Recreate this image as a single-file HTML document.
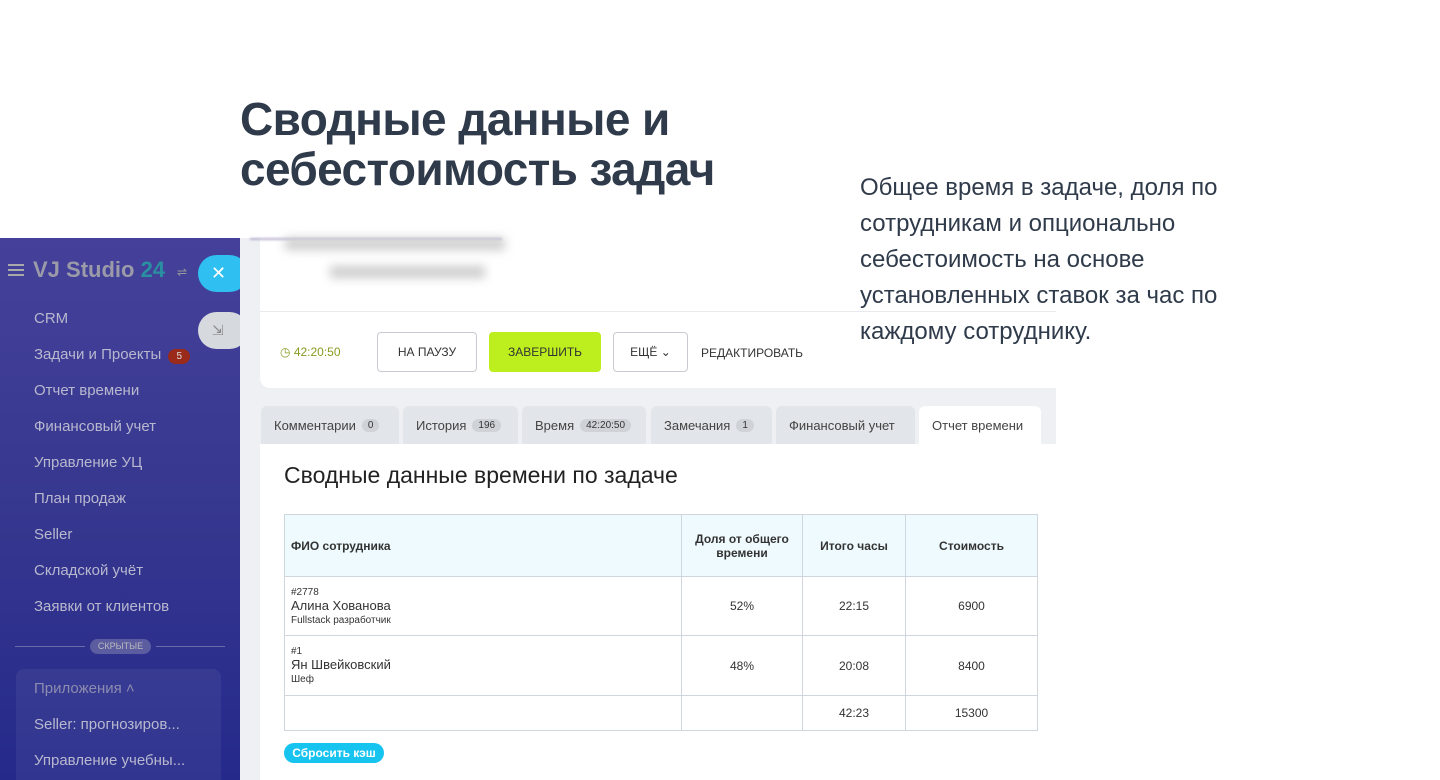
<!DOCTYPE html>
<html><head><meta charset="utf-8"><style>
*{margin:0;padding:0;box-sizing:border-box}
body{width:1440px;height:780px;overflow:hidden;background:#fff;font-family:"Liberation Sans","DejaVu Sans",sans-serif;position:relative;color:#333}
.abs{position:absolute}
h1{position:absolute;left:240px;top:94px;font-size:46px;line-height:50px;font-weight:bold;color:#2f3a4a;letter-spacing:-0.6px}
.desc{position:absolute;left:860px;top:170px;font-size:24px;line-height:36px;color:#2f3a4a;width:440px;z-index:5}
.side{position:absolute;left:0;top:238px;width:240px;height:542px;background:linear-gradient(180deg,#45419a 0%,#36378f 50%,#25298a 100%);overflow:hidden}
.side .it{position:absolute;left:34px;font-size:15px;color:#b8b8cf}
.gray{position:absolute;left:240px;top:238px;width:816px;height:542px;background:#eef0f3}
.card{position:absolute;left:260px;top:238px;width:796px;height:150px;background:#fff;border-radius:0 0 0 10px}
.btn{position:absolute;top:332px;height:40px;border:1px solid #c8ccd2;border-radius:4px;font-size:12px;display:flex;align-items:center;justify-content:center;color:#333}
.tab{position:absolute;top:406px;height:38px;background:#e2e5e9;border-radius:6px 6px 0 0;font-size:13px;color:#444;display:flex;align-items:center;padding-left:13px}
.bd{display:inline-block;background:#cfd3d8;border-radius:9px;font-size:10px;padding:1px 6px;margin-left:6px;color:#333}
table{position:absolute;left:284px;top:514px;border-collapse:collapse;width:754px}
td{border:1px solid #cfd6de;font-size:12px;text-align:center;color:#333}
th{border:1px solid #cfd6de;background:#eefafd;font-size:12px;font-weight:bold;color:#333}
</style></head><body>
<h1>Сводные данные и<br>себестоимость задач</h1>

<div class="side">
<div class="abs" style="left:8px;top:26px;width:16px;height:2px;background:#aaa;box-shadow:0 5px 0 #aaa,0 10px 0 #aaa"></div>
<div class="abs" style="left:33px;top:19px;font-size:22px;font-weight:bold;color:#9a9aa8">VJ Studio <span style="color:#2a8fa0">24</span></div>
<div class="abs" style="left:177px;top:27px;font-size:12px;color:#999">⇌</div>
<div class="abs" style="left:198px;top:17px;width:50px;height:37px;background:#2fbff0;border-radius:19px;color:#fff;font-size:18px;padding-left:13px;line-height:37px">✕</div>
<div class="abs" style="left:198px;top:74px;width:50px;height:37px;background:#d6d9de;border-radius:19px;color:#888;font-size:14px;padding-left:14px;line-height:37px">⇲</div>
<div class="it" style="top:72px">CRM</div>
<div class="it" style="top:108px">Задачи и Проекты <span style="display:inline-block;background:#9a2a1a;color:#ddd;font-size:10px;border-radius:9px;padding:2px 8px;margin-left:3px">5</span></div>
<div class="it" style="top:144px">Отчет времени</div>
<div class="it" style="top:180px">Финансовый учет</div>
<div class="it" style="top:216px">Управление УЦ</div>
<div class="it" style="top:252px">План продаж</div>
<div class="it" style="top:288px">Seller</div>
<div class="it" style="top:324px">Складской учёт</div>
<div class="it" style="top:360px">Заявки от клиентов</div>
<div class="abs" style="left:15px;top:408px;width:70px;height:1px;background:#6a6aa8"></div>
<div class="abs" style="left:156px;top:408px;width:69px;height:1px;background:#6a6aa8"></div>
<div class="abs" style="left:90px;top:401px;width:61px;height:15px;background:#5c5ca0;border-radius:8px;font-size:9px;color:#bbb;text-align:center;line-height:15px">СКРЫТЫЕ</div>
<div class="abs" style="left:16px;top:431px;width:205px;height:120px;background:rgba(255,255,255,0.06);border-radius:8px"></div>
<div class="it" style="top:442px;color:#8c8cb0">Приложения ˄</div>
<div class="it" style="top:478px">Seller: прогнозиров...</div>
<div class="it" style="top:514px">Управление учебны...</div>
</div>

<div class="gray"></div>
<div class="card">
<div class="abs" style="left:-10px;top:0;width:252px;height:2px;background:#b8b0d0;filter:blur(1px)"></div>
<div class="abs" style="left:25px;top:0;width:220px;height:12px;background:#ccc;filter:blur(5px)"></div>
<div class="abs" style="left:70px;top:28px;width:155px;height:12px;background:#ccc;filter:blur(5px)"></div>
<div class="abs" style="left:0;top:73px;width:796px;height:1px;background:#e8eaee"></div>
<div class="abs" style="left:20px;top:107px;font-size:12px;color:#8a9a20">◷ <span style="color:#8a9a20">42:20:50</span></div>
</div>
<div class="btn" style="left:377px;width:100px">НА ПАУЗУ</div>
<div class="btn" style="left:489px;width:112px;background:#bdee1e;border-color:#bdee1e">ЗАВЕРШИТЬ</div>
<div class="btn" style="left:613px;width:75px">ЕЩЁ ⌄</div>
<div class="abs" style="left:701px;top:346px;font-size:12px">РЕДАКТИРОВАТЬ</div>

<div class="tab" style="left:261px;width:138px">Комментарии<span class="bd">0</span></div>
<div class="tab" style="left:403px;width:115px">История<span class="bd">196</span></div>
<div class="tab" style="left:522px;width:124px">Время<span class="bd">42:20:50</span></div>
<div class="tab" style="left:651px;width:121px">Замечания<span class="bd">1</span></div>
<div class="tab" style="left:776px;width:139px">Финансовый учет</div>
<div class="tab" style="left:919px;width:122px;background:#fff">Отчет времени</div>

<div class="abs" style="left:260px;top:444px;width:796px;height:336px;background:#fff"></div>
<div class="abs" style="left:284px;top:462px;font-size:23px;color:#222">Сводные данные времени по задаче</div>
<table>
<tr style="height:62px"><th style="text-align:left;padding-left:6px;width:397px">ФИО сотрудника</th><th style="width:121px">Доля от общего<br>времени</th><th style="width:103px">Итого часы</th><th>Стоимость</th></tr>
<tr style="height:59px"><td style="text-align:left;padding-left:6px;font-size:10px;line-height:13px">#2778<br><span style="font-size:13px">Алина Хованова</span><br>Fullstack разработчик</td><td>52%</td><td>22:15</td><td>6900</td></tr>
<tr style="height:60px"><td style="text-align:left;padding-left:6px;font-size:10px;line-height:13px">#1<br><span style="font-size:13px">Ян Швейковский</span><br>Шеф</td><td>48%</td><td>20:08</td><td>8400</td></tr>
<tr style="height:35px"><td></td><td></td><td>42:23</td><td>15300</td></tr>
</table>
<div class="abs" style="left:284px;top:743px;width:100px;height:20px;background:#17c3ef;border-radius:10px;color:#fff;font-size:12px;font-weight:bold;text-align:center;line-height:20px">Сбросить кэш</div>
<div class="desc">Общее время в задаче, доля по сотрудникам и опционально себестоимость на основе установленных ставок за час по каждому сотруднику.</div>
</body></html>
